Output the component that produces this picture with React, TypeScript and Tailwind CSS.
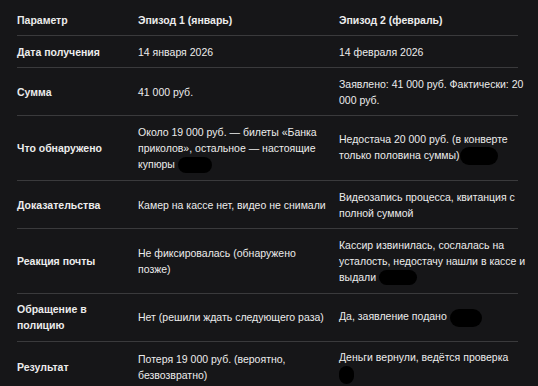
import type { ReactNode } from "react";

type Row = { label: ReactNode; ep1: ReactNode; ep2: ReactNode };

function Blot({ className }: { className: string }) {
  return <span aria-hidden className={`inline-block rounded-full bg-black align-middle ${className}`} />;
}

const rows: Row[] = [
  { label: "Дата получения", ep1: "14 января 2026", ep2: "14 февраля 2026" },
  {
    label: "Сумма",
    ep1: "41 000 руб.",
    ep2: (
      <>
        <span className="whitespace-nowrap">Заявлено: 41 000 руб. Фактически: 20</span>
        <br />
        000 руб.
      </>
    ),
  },
  {
    label: "Что обнаружено",
    ep1: (
      <>
        Около 19 000 руб. — билеты «Банка приколов», остальное — настоящие купюры{" "}
        <Blot className="h-[16px] w-[34px]" />
      </>
    ),
    ep2: (
      <>
        Недостача 20 000 руб. (в конверте только половина суммы)
        <Blot className="h-[18px] w-[38px]" />
      </>
    ),
  },
  { label: "Доказательства", ep1: "Камер на кассе нет, видео не снимали", ep2: "Видеозапись процесса, квитанция с полной суммой" },
  {
    label: "Реакция почты",
    ep1: "Не фиксировалась (обнаружено позже)",
    ep2: (
      <>
        Кассир извинилась, сослалась на
        <br />
        <span className="whitespace-nowrap">усталость, недостачу нашли в кассе и</span>
        <br />
        выдали <Blot className="h-[15px] w-[38px]" />
      </>
    ),
  },
  {
    label: "Обращение в полицию",
    ep1: "Нет (решили ждать следующего раза)",
    ep2: (
      <>
        Да, заявление подано <Blot className="h-[18px] w-[32px]" />
      </>
    ),
  },
  {
    label: "Результат",
    ep1: "Потеря 19 000 руб. (вероятно, безвозвратно)",
    ep2: (
      <>
        Деньги вернули, ведётся проверка
        <span className="block">
          <Blot className="h-[18px] w-[15px]" />
        </span>
      </>
    ),
  },
];

export default function App() {
  return (
    <div className="min-h-screen bg-[#161618] pt-[5px] pr-[20px] pl-[17px] font-['Liberation_Sans',Arial,sans-serif] text-[10.5px] leading-[16px] text-[#ececec]">
      <div className="grid grid-cols-[121px_201px_1fr] border-b border-[#3a3a3c] font-bold">
        <div className="py-[7px] pr-2">Параметр</div>
        <div className="py-[7px] pr-2">Эпизод 1 (январь)</div>
        <div className="py-[7px]">Эпизод 2 (февраль)</div>
      </div>
      {rows.map((r, i) => (
        <div
          key={i}
          className={`grid grid-cols-[121px_201px_1fr] items-center ${i < rows.length - 1 ? "border-b border-[#3a3a3c]" : ""}`}
        >
          <div className="py-[7.5px] pr-2 font-bold">{r.label}</div>
          <div className="py-[7.5px] pr-2">{r.ep1}</div>
          <div className="py-[7.5px]">{r.ep2}</div>
        </div>
      ))}
    </div>
  );
}
